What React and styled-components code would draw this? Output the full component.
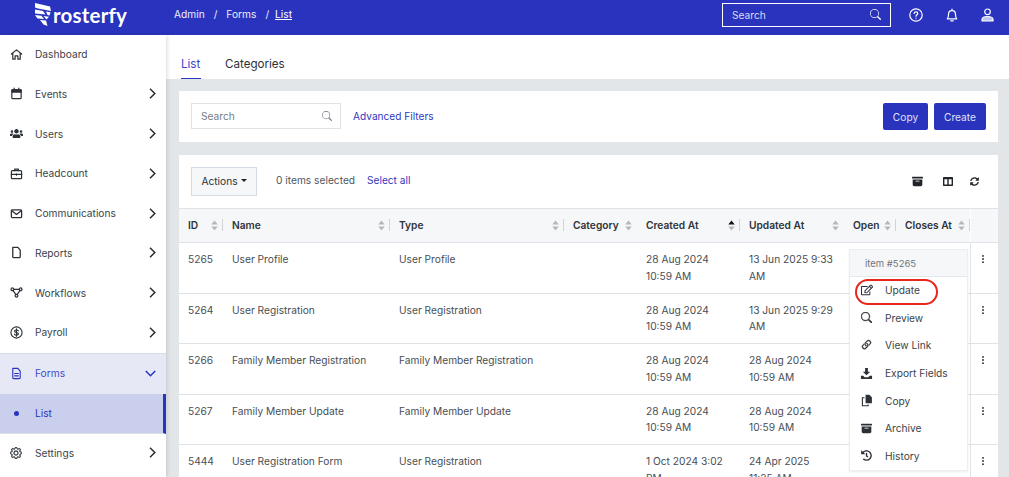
import React from "react";
import styled, { createGlobalStyle } from "styled-components";
import { BsSearch, BsGear, BsLink45Deg, BsThreeDotsVertical, BsArchiveFill } from "react-icons/bs";
import { FaUsers, FaRegEdit, FaHistory, FaSyncAlt } from "react-icons/fa";

const BLUE = "#2a33bd";

const Global = createGlobalStyle`
  html, body { margin: 0; padding: 0; height: 477px; overflow: hidden; background: #e3e6e9; }
  body { font-family: Inter, "Liberation Sans", sans-serif; color: #3c4248; }
  * { box-sizing: border-box; }
`;

const Page = styled.div`width: 1009px; height: 477px; overflow: hidden; display: flex; flex-direction: column;`;
const Header = styled.header`height: 35px; flex: none; background: ${BLUE}; display: flex; align-items: center; color: #fff;`;
const Logo = styled.div`width: 174px; padding-left: 35px; display: flex; align-items: center; gap: 2px;`;
const LogoWord = styled.span`font: 700 20.5px/1 Lato, sans-serif; letter-spacing: 0.2px; margin-top: -5px;`;
const Crumbs = styled.nav`flex: 1; display: flex; font-size: 10.2px; margin-top: -7px; color: #eef;`;
const Crumb = styled.span`margin-right: ${p => p.$gap ?? 9}px; ${p => p.$current && "text-decoration: underline; color:#fff;"}`;
const TopSearch = styled.div`width: 169px; height: 24px; border: 1px solid #fff; margin-top: -6px; display: flex; align-items: center; justify-content: space-between; padding: 0 9px 0 9px; font-size: 10.2px; color: #d9dcf7;`;
const TopIcons = styled.div`display: flex; width: 118px; padding-left: 18px; gap: 22px; margin-top: -6px; align-items: center;`;

const Body = styled.div`flex: 1; display: flex; min-height: 0;`;
const Side = styled.aside`width: 166px; flex: none; background: #fff; box-shadow: 1px 0 4px rgba(40,50,70,.18); z-index: 2;`;
const Item = styled.div`height: ${p => p.$h || 39.75}px; display: flex; align-items: center; padding: 0 10px 1.6px 10px; font-size: 10.2px; color: ${p => p.$active ? "#4149c6" : "#3c4248"}; background: ${p => p.$active ? "#e6e8f6" : "#fff"}; ${p => p.$active && "border-top: 1px solid #d8dbe4;"}`;
const SubItem = styled(Item)`background: #cbcfee; color: ${BLUE}; border-right: 3px solid ${BLUE}; border-bottom: 1px solid #dde0e6; padding: 0 0 0 10px;`;
const ItemIcon = styled.span`width: 25px; display: flex; font-size: 12px; align-items: center; color: ${p => p.$active ? BLUE : "#2c3137"};`;
const Dot = styled.span`width: 5px; height: 5px; border-radius: 50%; background: ${BLUE}; margin-left: 4px; margin-right: 16px;`;
const Label = styled.span`flex: 1;`;
const Chevron = styled.svg`width: ${p => p.$open ? 11 : 7}px; height: ${p => p.$open ? 7 : 11}px; fill: none; stroke: ${p => p.$open ? BLUE : "#2a2d31"}; stroke-width: 1.5; flex: none;`;

const Main = styled.main`flex: 1; min-width: 0; display: flex; flex-direction: column;`;
const Tabs = styled.div`height: 44px; flex: none; background: #fff; display: flex; gap: 24px; padding: 0 0 0 15px; align-items: flex-end;`;
const Tab = styled.div`height: 22px; font-size: 11.6px; color: ${p => p.$active ? "#3a43c4" : "#2c3137"}; line-height: 14px; min-width: 20px; ${p => p.$active && `border-bottom: 1px solid ${BLUE};`}`;
const Content = styled.div`padding: 12px 11px 0 13px; display: flex; flex-direction: column; gap: 13px;`;
const Card = styled.section`background: #fff;`;
const FilterCard = styled(Card)`height: 51px; display: flex; align-items: center; padding: 0 12px;`;
const SearchBox = styled.div`width: 150px; height: 26px; margin-top: -1px; border: 1px solid #dfe3e8; display: flex; align-items: center; justify-content: space-between; padding: 0 8px 1px 9px; font-size: 10.2px; color: #757c84; margin-right: 12px;`;
const LinkText = styled.span`font-size: 10.15px; color: #3038bf; margin-bottom: ${p => p.$lift ?? 1}px;`;
const Spacer = styled.div`flex: 1;`;
const Btn = styled.button`height: 27px; padding: 0 0; width: ${p => p.$w}px; background: ${BLUE}; border: 0; border-radius: 2px; color: #dfe2fa; font: 10.2px Inter, sans-serif; margin-left: 6px;`;

const Toolbar = styled.div`height: 53px; display: flex; align-items: center; padding: 0 12px;`;
const ActionsBtn = styled.div`width: 66px; height: 29px; background: #f6f7f9; border: 1px solid #d5dbe3; display: flex; align-items: center; justify-content: center; gap: 3px; padding-bottom: 2px; font-size: 10.2px; color: #2c3137; margin-right: 19px;`;
const Caret = styled.span`border: 3px solid transparent; border-top-color: #222; border-bottom: 0;`;
const Muted = styled.span`font-size: 10.2px; color: #4e555c; margin-right: 12px; margin-bottom: 3px;`;
const ToolIcons = styled.div`display: flex; align-items: center; gap: 20px; font-size: 11px; color: #22262b; margin-right: 7px; margin-bottom: 1px;`;
const SyncWrap = styled.span`display: flex; margin-left: -3px;`;

const Table = styled.div`position: relative; display: grid; grid-template-columns: 44px 167px 174px 73px 103px 104px 52px 74px 28px; grid-template-rows: 34px; grid-auto-rows: 50.5px; border-top: 1px solid #dfe3e8;`;
const Th = styled.div`background: #f6f7f9; border-bottom: 1px solid #dfe3e8; display: flex; align-items: center; padding: 0 0 1px 9px; font-size: 10.2px; font-weight: 600; color: #2f343a; ${p => p.$sticky && "border-left: 1px solid #fff;"}`;
const ThLabel = styled.span`flex: 1; white-space: nowrap;`;
const SortWrap = styled.svg`width: 7px; height: 11px; flex: none; margin-right: ${p => p.$sep ? 4 : 5}px;`;
const Sep = styled.span`width: 1px; height: 12px; background: #cfd4da; flex: none;`;
const Td = styled.div`padding: 8px 10px 0 9px; font-size: 10.2px; line-height: 16.5px; color: #474d54; border-bottom: 1px solid #dfe3e8; overflow: hidden;`;
const KebabCell = styled(Td)`border-left: 1px solid #dfe3e8; padding: 11px 4px 0 0; display: flex; justify-content: center; font-size: 10px; color: #2a2e33; align-items: flex-start;`;

const Menu = styled.div`position: absolute; left: 670px; top: 40px; width: 119px; height: 222px; background: #fff; border: 1px solid #eceef1; box-shadow: 0 1px 2px rgba(0,0,0,.08); display: flex; flex-direction: column;`;
const MenuHead = styled.div`height: 27px; flex: none; background: #f6f7f9; border-bottom: 1px solid #e4e7eb; font-size: 9.5px; color: #6f767d; display: flex; align-items: center; padding-left: 15px;`;
const MenuList = styled.div`display: flex; flex-direction: column;`;
const MenuItem = styled.div`height: 27.6px; display: flex; align-items: center; padding: 0 0 1px 10px; font-size: 10.2px; color: #3c4248; gap: 12px;`;
const MenuIcon = styled.span`width: 13px; display: flex; justify-content: center; font-size: 11.5px; color: #2c3137;`;
const Highlight = styled.div`position: absolute; left: 5px; top: 29px; width: 83px; height: 26px; border: 2px solid #e8261c; border-radius: 13px;`;

const LogoMark = () => (
  <svg width="16" height="23" viewBox="0 0 16 23" style={{ marginTop: -6 }}>
    <g fill="#fff">
      <path d="M0 0 L15 3.500 L16 8 L3 5.500 L0 4.500Z" />
      <path d="M0 6.500 L8 8 L10.500 11.500 L0 10.500Z" />
      <path d="M11 8.500 L15.500 9.200 L14.500 12.500 L12.500 12Z" />
      <path d="M0 12 L6.500 12.800 L9 16 L2.500 15.500Z" />
      <path d="M8.500 13 L14 13.800 L11.500 16.500Z" />
      <path d="M5 17 L11 17.500 L12.500 23 L8.500 21.500Z" />
    </g>
  </svg>
);

const Ic = ({ children, w = 13, h = 13, vb = "0 0 14 14", sw = 1.3, fill = "none" }) => (
  <svg width={w} height={h} viewBox={vb} fill={fill} stroke={sw ? "currentColor" : "none"} strokeWidth={sw} strokeLinejoin="round" strokeLinecap="round">{children}</svg>
);

const Sort = ({ sep, active }) => (
  <SortWrap viewBox="0 0 7 11" $sep={sep}>
    <path d="M3.500 0.500 L6.700 4.500 H0.300Z" fill={active ? "#111" : "#b3b8bd"} />
    <path d="M3.500 10.500 L6.700 6.500 H0.300Z" fill="#b3b8bd" />
  </SortWrap>
);

const Right = () => <Chevron viewBox="0 0 7 11"><path d="M1 .8 L5.800 5.500 L1 10.200" /></Chevron>;
const Down = () => <Chevron $open viewBox="0 0 11 7"><path d="M.8 1 L5.500 5.800 L10.200 1" /></Chevron>;

const nav = [
  ["Dashboard", <Ic><path d="M1.500 6.500 L7 2 L12.500 6.500 M3 5.500 V12 H5.500 V8.500 H8.500 V12 H11 V5.500" /></Ic>, false],
  ["Events", <Ic><rect x="2" y="3" width="10" height="9.500" rx="1" /><path d="M4.500 1.300 V3 M9.500 1.300 V3" /><rect x="2" y="3" width="10" height="2.500" fill="currentColor" /></Ic>, true],
  ["Users", <FaUsers size={13} />, true],
  ["Headcount", <Ic><rect x="1.500" y="4" width="11" height="8.500" rx="1" /><path d="M5 4 V2.300 H9 V4 M1.500 8 H12.500 M7 7.300 V8.800" /></Ic>, true],
  ["Communications", <Ic sw={1.4}><rect x="1.500" y="3" width="11" height="8.500" rx="1" /><path d="M2 4 L7 8 L12 4" /></Ic>, true],
  ["Reports", <Ic sw={1.4}><path d="M3 1.500 H8.500 L11 4.500 V11.500 Q11 12.500 10 12.500 H4 Q3 12.500 3 11.500Z" /></Ic>, true],
  ["Workflows", <Ic vb="0 0 14 12" h={11}><circle cx="2.500" cy="2.500" r="1.500"/><circle cx="11.500" cy="2.500" r="1.500"/><circle cx="7" cy="9.500" r="1.500"/><path d="M4 2.500 H10 M3.300 4 L6.200 8 M10.700 4 L7.800 8"/></Ic>, true],
  ["Payroll", <Ic sw={1.2}><circle cx="7" cy="7" r="6"/><path d="M9 5.200 C8.700 4.500 7.900 4.300 7 4.300 C5.900 4.300 5 4.800 5 5.700 C5 7.800 9.100 6.400 9.100 8.400 C9.100 9.300 8.100 9.800 7 9.800 C6 9.800 5.200 9.500 4.900 8.800 M7 3 V11"/></Ic>, true],
];

const columns = [
  ["ID", true], ["Name", true], ["Type", true], ["Category", false],
  ["Created At", true, true], ["Updated At", false], ["Open", true], ["Closes At", true],
];

const rows = [
  ["5265", "User Profile", "User Profile", "28 Aug 2024 10:59 AM", "13 Jun 2025 9:33 AM"],
  ["5264", "User Registration", "User Registration", "28 Aug 2024 10:59 AM", "13 Jun 2025 9:29 AM"],
  ["5266", "Family Member Registration", "Family Member Registration", "28 Aug 2024 10:59 AM", "28 Aug 2024 10:59 AM"],
  ["5267", "Family Member Update", "Family Member Update", "28 Aug 2024 10:59 AM", "28 Aug 2024 10:59 AM"],
  ["5444", "User Registration Form", "User Registration", "1 Oct 2024 3:02 PM", "24 Apr 2025 11:25 AM"],
];

const menu = [
  ["Update", <FaRegEdit size={12} />],
  ["Preview", <BsSearch size={11} style={{ strokeWidth: 0.6, stroke: "currentColor" }} />],
  ["View Link", <BsLink45Deg size={14} style={{ strokeWidth: 0.6, stroke: "currentColor" }} />],
  ["Export Fields", <Ic sw={0} fill="currentColor"><path d="M5.500 1 H8.500 V5 H11 L7 9 L3 5 H5.500Z M1 9.500 H3.500 L5 11 H9 L10.500 9.500 H13 V13 H1Z" /></Ic>],
  ["Copy", <Ic sw={0} fill="currentColor"><path d="M6 .8 H10 L12.800 3.600 V10 H6Z" /><path d="M2 3.500 H4.800 V4.700 H3.200 V12 H8.200 V11.200 H9.400 V13.200 H2Z" /></Ic>],
  ["Archive", <BsArchiveFill size={11} />],
  ["History", <FaHistory size={11} />],
];

const QuestionIcon = () => <Ic w={14} h={14} sw={1.2}><circle cx="7" cy="7" r="6.200"/><path d="M5.200 5.500 C5.200 4.400 6 3.900 7 3.900 C8 3.900 8.800 4.500 8.800 5.400 C8.800 6.700 7 6.700 7 8.200 M7 10 V10.200"/></Ic>;
const BellIcon = () => <Ic w={14} h={14} sw={1.2}><path d="M2.300 10.800 C3.200 10 3.500 8.500 3.500 6.500 C3.500 4 5 2.700 7 2.700 C9 2.700 10.500 4 10.500 6.500 C10.500 8.500 10.800 10 11.700 10.800Z M7 1 V2.500 M5.800 12.800 H8.200"/></Ic>;
const UserIcon = () => <Ic w={13} h={14} vb="0 0 13 14" sw={1.2}><circle cx="6.500" cy="3.800" r="2.800"/><path d="M1 13 V11.500 C1 9.500 3 8.500 6.500 8.500 C10 8.500 12 9.500 12 11.500 V13Z" fill="#bfc3f0"/></Ic>;
const ColumnsIcon = () => <Ic w={10} h={9} vb="0 0 10 9" sw={1.4}><rect x=".7" y=".7" width="8.600" height="7.600"/><path d="M5 1 V8 M1 1.500 H9" /></Ic>;

export default function App() {
  return (
    <Page>
      <Global />
      <Header>
        <Logo><LogoMark /><LogoWord>rosterfy</LogoWord></Logo>
        <Crumbs>
          <Crumb>Admin</Crumb><Crumb $gap={9}>/</Crumb><Crumb>Forms</Crumb><Crumb $gap={6}>/</Crumb><Crumb $current>List</Crumb>
        </Crumbs>
        <TopSearch>Search<BsSearch size={11} color="#fff" /></TopSearch>
        <TopIcons><QuestionIcon /><BellIcon /><UserIcon /></TopIcons>
      </Header>
      <Body>
        <Side>
          {nav.map(([name, icon, more]) => (
            <Item key={name}>
              <ItemIcon>{icon}</ItemIcon><Label>{name}</Label>
              {more && <Right />}
            </Item>
          ))}
          <Item $active $h={41}>
            <ItemIcon $active>
              <Ic sw={1.2}><path d="M3 1.500 H8.500 L11 4.500 V11.500 Q11 12.500 10 12.500 H4 Q3 12.500 3 11.500Z M5 7 H9 M5 9.500 H9" /></Ic>
            </ItemIcon>
            <Label>Forms</Label>
            <Down />
          </Item>
          <SubItem><Dot /><Label>List</Label></SubItem>
          <Item>
            <ItemIcon><BsGear style={{ strokeWidth: 0.5, stroke: "currentColor" }} /></ItemIcon><Label>Settings</Label>
            <Right />
          </Item>
        </Side>
        <Main>
          <Tabs><Tab $active>List</Tab><Tab>Categories</Tab></Tabs>
          <Content>
            <FilterCard>
              <SearchBox>Search<BsSearch size={10} /></SearchBox>
              <LinkText>Advanced Filters</LinkText>
              <Spacer />
              <Btn $w={45}>Copy</Btn><Btn $w={52}>Create</Btn>
            </FilterCard>
            <Card>
              <Toolbar>
                <ActionsBtn>Actions<Caret /></ActionsBtn>
                <Muted>0 items selected</Muted>
                <LinkText $lift={3}>Select all</LinkText>
                <Spacer />
                <ToolIcons><BsArchiveFill /><ColumnsIcon /><SyncWrap><FaSyncAlt size={9} /></SyncWrap></ToolIcons>
              </Toolbar>
              <Table>
                {columns.map(([name, sep, active]) => (
                  <Th key={name}>
                    <ThLabel>{name}</ThLabel>
                    <Sort sep={sep} active={active} />
                    {sep && <Sep />}
                  </Th>
                ))}
                <Th $sticky />
                {rows.map(r => (
                  <React.Fragment key={r[0]}>
                    <Td>{r[0]}</Td><Td>{r[1]}</Td><Td>{r[2]}</Td><Td />
                    <Td>{r[3]}</Td><Td>{r[4]}</Td><Td /><Td />
                    <KebabCell><BsThreeDotsVertical /></KebabCell>
                  </React.Fragment>
                ))}
                <Menu>
                  <MenuHead>item #5265</MenuHead>
                  <MenuList>
                    {menu.map(([name, icon]) => (
                      <MenuItem key={name}><MenuIcon>{icon}</MenuIcon>{name}</MenuItem>
                    ))}
                  </MenuList>
                  <Highlight />
                </Menu>
              </Table>
            </Card>
          </Content>
        </Main>
      </Body>
    </Page>
  );
}
